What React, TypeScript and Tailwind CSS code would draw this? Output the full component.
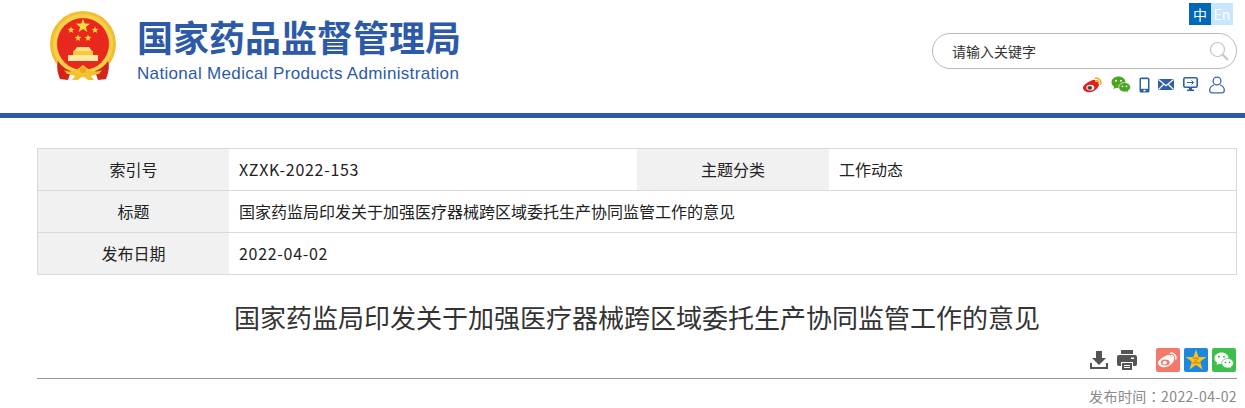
import React from 'react';

const star = (cx: number, cy: number, r: number, rot = 0) => {
  const pts: string[] = [];
  for (let i = 0; i < 10; i++) {
    const rad = i % 2 === 0 ? r : r * 0.4;
    const a = ((-90 + rot + i * 36) * Math.PI) / 180;
    pts.push(`${(cx + rad * Math.cos(a)).toFixed(2)},${(cy + rad * Math.sin(a)).toFixed(2)}`);
  }
  return pts.join(' ');
};

const Emblem = () => (
  <svg width="85" height="85" viewBox="0 0 85 85" className="-m-[9px] -mt-[6px] shrink-0">
    <circle cx="43" cy="40" r="33" fill="#f2bd30" />
    <circle cx="43" cy="40" r="30" fill="#f7d04a" />
    <circle cx="43" cy="40" r="26" fill="#e8281e" />
    <polygon points={star(43, 22, 7.5)} fill="#fbdc3c" />
    <polygon points={star(31, 26, 3.6)} fill="#fbdc3c" />
    <polygon points={star(55, 26, 3.6)} fill="#fbdc3c" />
    <polygon points={star(38, 34, 3.6)} fill="#fbdc3c" />
    <polygon points={star(48, 34, 3.6)} fill="#fbdc3c" />
    <path d="M37 43h12l3 4H34z" fill="#fbe08a" />
    <path d="M33 47h20v4H33z" fill="#f8c93a" />
    <path d="M28 51h30v6H28z" fill="#fde9a0" />
    <path d="M18 57c3 5 9 9 13 10l-3 9-8-1c-2-5-4-12-2-18zM68 57c-3 5-9 9-13 10l3 9 8-1c2-5 4-12 2-18z" fill="#d4231b" />
    <path d="M24 66c6 3 12 1 19-5 7 6 13 8 19 5l-3 4-9 1 4 5h-6l-5-4-5 4h-6l4-5-9-1z" fill="#f5c22f" />
    <circle cx="43" cy="66" r="3" fill="#e9a91f" />
  </svg>
);

const WeiboGlyph = () => (
  <svg width="20" height="16" viewBox="0 0 20 16">
    <path d="M8 3.800c2-1.200 3.900-1.300 4.400-.4.300.6.200 1.100 0 1.800 1.600-.5 3.500-.1 3.700 1.300.5 3.200-4.400 8.800-9.600 8.800C3 15.300 0 13.400 0 10.700 0 8.500 4 5.400 8 3.800z" fill="#e0201c" />
    <ellipse cx="7.300" cy="10.600" rx="4" ry="2.900" fill="#f4f4f4" />
    <ellipse cx="6.800" cy="10.800" rx="2.300" ry="1.900" fill="#444" />
    <path d="M12.500 1.200c3-.7 6.200 2 5.200 5.800M13 3.700c1.600-.4 3 1.100 2.500 2.700" fill="none" stroke="#eda81b" strokeWidth="1.500" strokeLinecap="round" />
  </svg>
);

const WeiboShare = () => (
  <svg width="20" height="16" viewBox="0 0 20 16">
    <path d="M8 3.800c2-1.200 3.900-1.300 4.400-.4.300.6.200 1.100 0 1.800 1.600-.5 3.500-.1 3.700 1.300.5 3.200-4.400 8.800-9.600 8.800C3 15.300 0 13.400 0 10.700 0 8.500 4 5.400 8 3.800z" fill="#fff" />
    <ellipse cx="7.300" cy="10.500" rx="4.400" ry="3" fill="#f4786b" />
    <ellipse cx="6.800" cy="10.700" rx="2.200" ry="1.700" fill="#fff" />
    <path d="M12.500 1.200c3-.7 6.200 2 5.200 5.800M13 3.700c1.600-.4 3 1.100 2.500 2.700" fill="none" stroke="#fff" strokeWidth="1.500" strokeLinecap="round" />
  </svg>
);

const WechatGlyph = ({ back, front, dot, size = 20 }: { back: string; front: string; dot: string; size?: number }) => (
  <svg width={size} height={size * 0.85} viewBox="0 0 20 17">
    <path d="M7.500 0.500C3.600 0.500.5 3 .5 6.200c0 1.900 1 3.400 2.600 4.500L2.500 13l2.500-1.300c.8.200 1.600.3 2.500.3 3.900 0 7-2.600 7-5.800S11.400.5 7.500.5z" fill={back} />
    <circle cx="5" cy="4.700" r="1" fill={dot} />
    <circle cx="10" cy="4.700" r="1" fill={dot} />
    <path d="M13.500 6.500c-3.200 0-5.800 2.100-5.800 4.800s2.600 4.700 5.800 4.700c.7 0 1.300-.1 1.900-.3l2.100 1.100-.5-1.900c1.500-.9 2.500-2.200 2.500-3.700 0-2.600-2.700-4.700-5.800-4.700z" fill={front} stroke={dot} strokeWidth=".7" />
    <circle cx="11.500" cy="10.300" r=".9" fill={dot} />
    <circle cx="15.500" cy="10.300" r=".9" fill={dot} />
  </svg>
);

const HeaderIcons = () => (
  <div className="flex items-center h-[17px] mt-[7px] pr-[12px]">
    <WeiboGlyph />
    <div className="ml-[8px]"><WechatGlyph back="#48a520" front="#48a520" dot="#fff" /></div>
    <svg width="11" height="16" viewBox="0 0 11 16" className="ml-[8px]">
      <rect x=".5" y=".5" width="10" height="15" rx="1.500" fill="#2f5fa9" />
      <rect x="2" y="2.200" width="7" height="9.600" fill="#fff" />
      <rect x="4.500" y="12.800" width="2" height="1.600" fill="#fff" />
    </svg>
    <svg width="16" height="11" viewBox="0 0 16 11" className="ml-[8px]">
      <rect width="16" height="11" rx="1" fill="#2f5fa9" />
      <path d="M.5.500 8 6.800 15.500.500M.5 10.500l5-5M15.500 10.500l-5-5" fill="none" stroke="#fff" strokeWidth="1.200" />
    </svg>
    <svg width="15" height="15" viewBox="0 0 15 15" className="ml-[9px]">
      <rect x=".8" y=".8" width="13.400" height="9.400" rx="1.500" fill="#fff" stroke="#2f5fa9" strokeWidth="1.600" />
      <path d="M4 5.500h6.500M8.500 3.500l2 2-2 2" fill="none" stroke="#2f5fa9" strokeWidth="1" />
      <path d="M6 11h3v1.500h2V14H4v-1.500h2z" fill="#2f5fa9" />
    </svg>
    <svg width="16" height="18" viewBox="0 0 16 18" className="ml-[11px]">
      <circle cx="8" cy="5" r="3.900" fill="none" stroke="#3f66b0" strokeWidth="1.300" />
      <path d="M5 9c-2.500.8-4.300 2.600-4.300 5.300 0 1.500.8 2.500 2.300 2.500h10c1.500 0 2.300-1 2.300-2.500C15.300 11.600 13.500 9.800 11 9" fill="none" stroke="#3f66b0" strokeWidth="1.300" />
    </svg>
  </div>
);

const Row = ({ children, last }: { children: React.ReactNode; last?: boolean }) => (
  <div className={`flex ${last ? 'h-[41px]' : 'h-[42px] border-b border-[#d9d9d9]'}`}>{children}</div>
);
const Label = ({ children, className = 'w-[191px]' }: { children: React.ReactNode; className?: string }) => (
  <div className={`${className} shrink-0 bg-[#f1f1f1] flex items-center justify-center pb-[2px]`}>{children}</div>
);
const Value = ({ children, className = '' }: { children: React.ReactNode; className?: string }) => (
  <div className={`pl-[10px] pb-[2px] flex items-center ${className}`}>{children}</div>
);

export default function App() {
  return (
    <div className="w-[1245px] h-[408px] bg-white overflow-hidden text-[16px] text-[#222] font-['Noto_Sans_CJK_SC',sans-serif]">
      <header className="h-[118px] border-b-[5px] border-[#2c5aa9] flex justify-between">
        <div className="flex pl-[49px] pt-[10px]">
          <Emblem />
          <div className="ml-[21px] mt-[4px]">
            <h1 className="text-[36px] leading-[44px] font-bold text-[#2c5aa9] whitespace-nowrap">国家药品监督管理局</h1>
            <p className="text-[17px] leading-[20px] mt-[6px] text-[#2c5aa9] whitespace-nowrap font-['Liberation_Sans',sans-serif] tracking-[0.33px]">National Medical Products Administration</p>
          </div>
        </div>
        <div className="w-[305px] mr-[8px] flex flex-col items-end pt-[3px]">
          <div className="flex mr-[4px] text-[14px] leading-[22px] text-center">
            <span className="w-[22px] h-[22px] bg-[#0068b7] text-white">中</span>
            <span className="w-[22px] h-[22px] bg-[#c9e6ff] text-white">En</span>
          </div>
          <div className="w-[305px] h-[36px] mt-[8px] border border-[#b8b8b8] rounded-full flex items-center justify-between pl-[19px] pr-[7px]">
            <span className="text-[14px] text-[#333]">请输入关键字</span>
            <svg width="20" height="20" viewBox="0 0 20 20">
              <circle cx="8.500" cy="8.500" r="7" fill="none" stroke="#c4c4c4" strokeWidth="1.200" />
              <path d="M13.500 13.500 19 19" stroke="#c4c4c4" strokeWidth="2" />
            </svg>
          </div>
          <HeaderIcons />
        </div>
      </header>

      <div className="ml-[37px] mr-[8px]">
        <section className="mt-[30px] border border-[#d9d9d9]">
          <Row>
            <Label>索引号</Label>
            <Value className="w-[408px] tracking-[0.7px]">XZXK-2022-153</Value>
            <Label className="w-[192px]">主题分类</Label>
            <Value>工作动态</Value>
          </Row>
          <Row>
            <Label>标题</Label>
            <Value>国家药监局印发关于加强医疗器械跨区域委托生产协同监管工作的意见</Value>
          </Row>
          <Row last>
            <Label>发布日期</Label>
            <Value className="tracking-[0.7px]">2022-04-02</Value>
          </Row>
        </section>

        <h2 className="mt-[23px] text-center text-[26px] leading-[38px] text-[#333]">国家药监局印发关于加强医疗器械跨区域委托生产协同监管工作的意见</h2>

        <div className="mt-[13px] h-[30px] border-b border-[#999] flex justify-end items-start pr-[1px]">
          <svg width="18" height="18" viewBox="0 0 18 18" className="mt-[2px]">
            <path d="M6 0h6v7h4l-7 7-7-7h4z" fill="#555" />
            <path d="M0 12h2v4h14v-4h2v6H0z" fill="#555" />
          </svg>
          <svg width="20" height="20" viewBox="0 0 20 20" className="ml-[9px] mt-[1px]">
            <path d="M4 0h12v4H4zM2 5h16a2 2 0 0 1 2 2v7a2 2 0 0 1-2 2h-2v-4H4v4H2a2 2 0 0 1-2-2V7a2 2 0 0 1 2-2z" fill="#555" />
            <path d="M5 13h10v7H5z" fill="#555" />
            <path d="M7 15h6v1H7zM7 17h6v1H7z" fill="#fff" />
            <rect x="14" y="7.500" width="3" height="1.500" fill="#fff" />
          </svg>
          <div className="w-[24px] h-[24px] ml-[19px] -mt-[1px] rounded-[2px] bg-[#f4786b] flex items-center justify-center">
            <WeiboShare />
          </div>
          <div className="w-[24px] h-[24px] ml-[4px] -mt-[1px] rounded-[2px] bg-[#1b87e0] flex items-center justify-center">
            <svg width="22" height="22" viewBox="0 0 22 22">
              <polygon points={star(11, 11.5, 11)} fill="#f7c41d" />
              <path d="M7.500 8.500h7l-4 4.500h4.500l-.5 1.500H7l4.500-4.500h-4z" fill="#e68a10" />
            </svg>
          </div>
          <div className="w-[24px] h-[24px] ml-[4px] -mt-[1px] rounded-[2px] bg-[#3dc04b] flex items-center justify-center">
            <WechatGlyph back="#fff" front="#fff" dot="#3dc04b" size={20} />
          </div>
        </div>

        <p className="mt-[7px] text-right text-[14px] leading-[20px] text-[#888] tracking-[0.4px]">
          发布时间<span className="font-['Noto_Sans_CJK_TC',sans-serif]">：</span>2022-04-02
        </p>
      </div>
    </div>
  );
}
